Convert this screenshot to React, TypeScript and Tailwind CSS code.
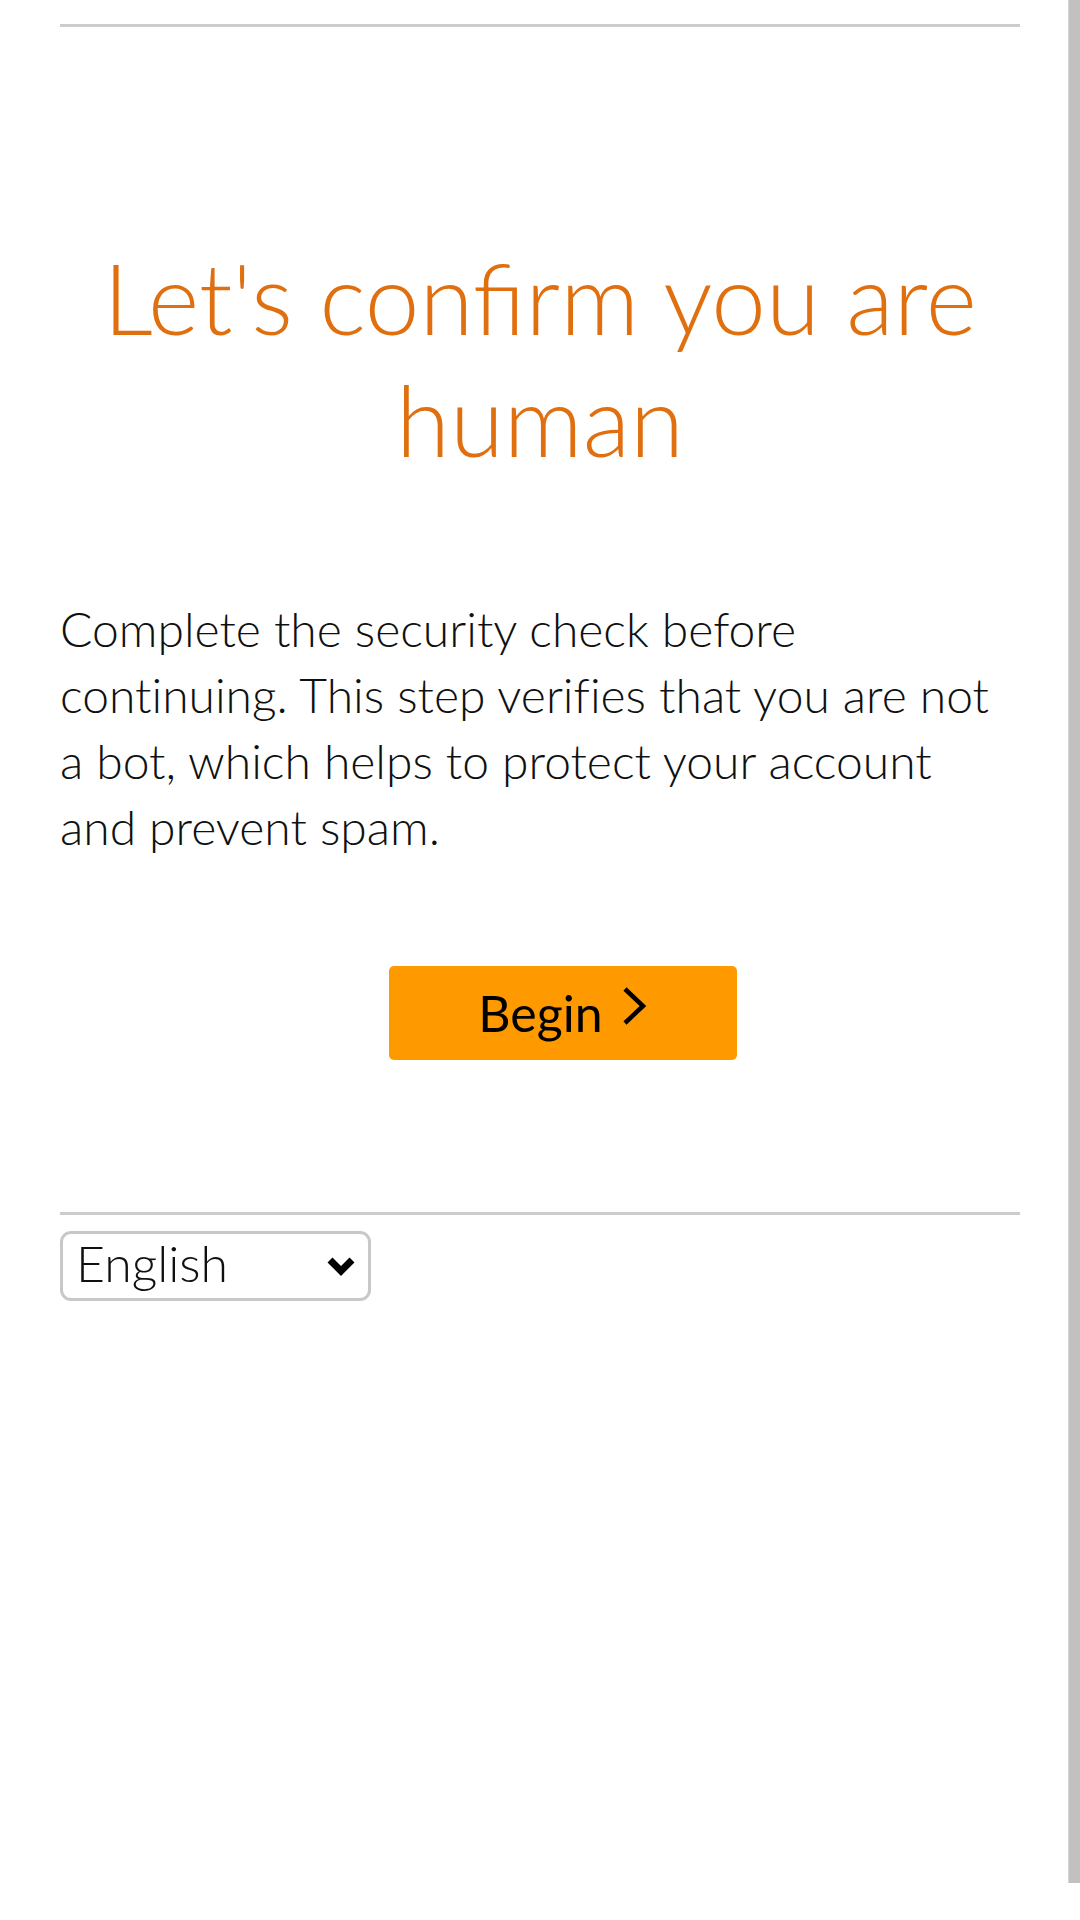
export default function App() {
  return (
    <div className="relative min-h-[1920px] w-full bg-white font-['Lato','Open_Sans',sans-serif] text-[#0f1111]">
      {/* page scrollbar thumb */}
      <div className="fixed right-0 top-0 h-[1883px] w-[12px] border-l border-[#d6d6d6] bg-[#c1c1c1]" />

      <div className="px-[60px] pt-[24px]">
        <div className="h-[3px] bg-[#cccccc]" />

        <h1 className="mt-[209px] text-center text-[98px] font-light leading-[122px] text-[#e0700f]">
          Let's confirm you are
          <br />
          human
        </h1>

        <p className="mt-[116px] whitespace-nowrap text-[48px] font-light leading-[66px] [font-variant-ligatures:none]">
          Complete the security check before
          <br />
          continuing. This step verifies that you are not
          <br />
          a bot, which helps to protect your account
          <br />
          and prevent spam.
        </p>

        <div className="mt-[106px] flex justify-center pl-[46px]">
          <button className="flex h-[94px] w-[348px] items-center justify-center gap-[18px] rounded-[5px] bg-[#ff9900] text-[50px] text-black">
            <span>Begin</span>
            <svg width="27" height="40" viewBox="0 0 27 40" className="-mt-[14px]">
              <polyline points="4,3 22,20 4,37" fill="none" stroke="black" strokeWidth="4.5" />
            </svg>
          </button>
        </div>

        <div className="mt-[152px] h-[3px] bg-[#cccccc]" />

        <div className="relative mt-[16px] w-[311px]">
          <select
            defaultValue="en"
            className="h-[70px] w-full appearance-none rounded-[11px] border-[3px] border-[#c8c8c8] bg-white pb-[6px] pl-[13px] text-[50px] font-light leading-[58px] text-[#0f1111] outline-none"
          >
            <option value="en">English</option>
          </select>
          <svg
            width="30"
            height="22"
            viewBox="0 0 30 22"
            className="pointer-events-none absolute right-[15px] top-[25px]"
          >
            <polyline points="4,4 15,15 26,4" fill="none" stroke="black" strokeWidth="7" />
          </svg>
        </div>
      </div>
    </div>
  );
}
